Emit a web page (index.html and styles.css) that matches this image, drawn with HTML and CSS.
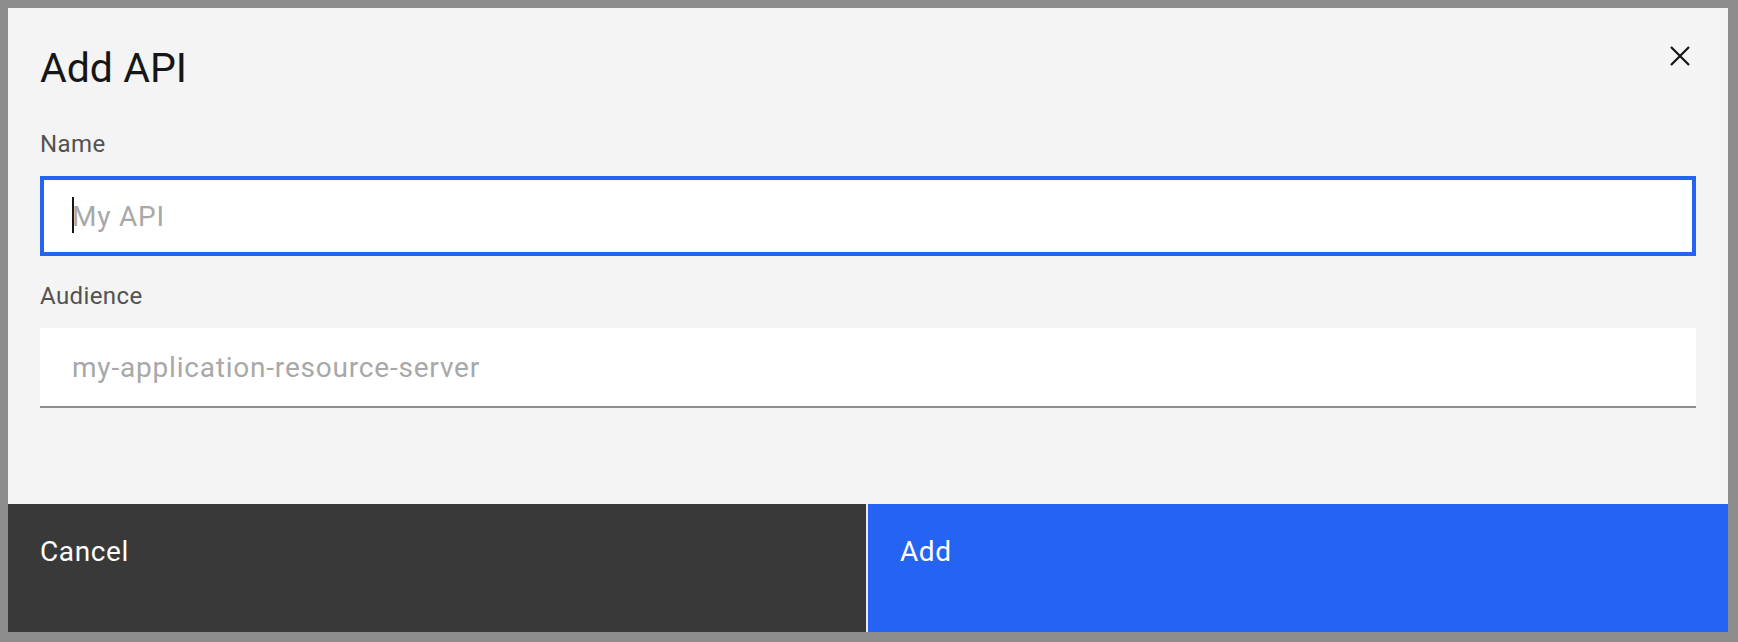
FILE: index.html
```html
<!DOCTYPE html>
<html lang="en">
<head>
<meta charset="utf-8">
<title>Add API</title>
<link rel="stylesheet" href="styles.css">
</head>
<body>
<div class="modal" role="dialog" aria-labelledby="modal-title">
  <div class="modal-body">
    <h2 class="modal-title" id="modal-title">Add API</h2>
    <button class="close-btn" type="button" aria-label="Close">
      <svg width="20" height="20" viewBox="0 0 20 20" aria-hidden="true">
        <path d="M1 1 L19 19 M19 1 L1 19" stroke="#161616" stroke-width="2.2" fill="none"/>
      </svg>
    </button>
    <div class="form-item">
      <label class="label" for="api-name">Name</label>
      <div class="input-wrap">
        <input class="text-input focused" id="api-name" type="text" placeholder="My API">
        <span class="caret"></span>
      </div>
    </div>
    <div class="form-item">
      <label class="label" for="api-audience">Audience</label>
      <div class="input-wrap">
        <input class="text-input" id="api-audience" type="text" placeholder="my-application-resource-server">
      </div>
    </div>
  </div>
  <div class="modal-footer">
    <button class="btn btn-secondary" type="button">Cancel</button>
    <button class="btn btn-primary" type="button">Add</button>
  </div>
</div>
</body>
</html>
```

FILE: styles.css
```css
html, body {
  margin: 0;
  padding: 0;
}

body {
  background: #8c8c8c;
  font-family: "Roboto", "Noto Sans", sans-serif;
  width: 1738px;
  height: 642px;
  overflow: hidden;
}

.modal {
  margin: 8px 10px 10px 8px;
  width: 1720px;
  height: 624px;
  background: #f4f4f4;
  display: flex;
  flex-direction: column;
  position: relative;
}

.modal-body {
  padding: 32px 32px 0 32px;
  display: flex;
  flex-direction: column;
}

.modal-title {
  margin: 0 0 32px 0;
  font-size: 41px;
  line-height: 56px;
  font-weight: 400;
  color: #161616;
}

.close-btn {
  position: absolute;
  top: 0;
  right: 0;
  width: 96px;
  height: 96px;
  border: 0;
  background: transparent;
  padding: 0;
  display: flex;
  align-items: center;
  justify-content: center;
  cursor: pointer;
}

.form-item {
  display: flex;
  flex-direction: column;
  margin-bottom: 24px;
}

.label {
  font-size: 24px;
  line-height: 32px;
  letter-spacing: 0.4px;
  color: #525252;
  margin-bottom: 16px;
}

.input-wrap {
  position: relative;
  display: flex;
}

.text-input {
  flex: 1;
  box-sizing: border-box;
  height: 80px;
  margin: 0;
  padding: 0 32px;
  border: 0;
  border-bottom: 2px solid #8d8d8d;
  background: #ffffff;
  font-family: inherit;
  font-size: 28px;
  letter-spacing: 0.8px;
  color: #161616;
  outline: none;
  caret-color: transparent;
}

.text-input::placeholder {
  color: #a8a8a8;
  opacity: 1;
}

.text-input.focused {
  border: 4px solid #2563f2;
  padding: 0 28px;
}

.caret {
  position: absolute;
  left: 32px;
  top: 21px;
  width: 2px;
  height: 36px;
  background: #161616;
}

.modal-footer {
  margin-top: auto;
  height: 128px;
  display: flex;
  gap: 2px;
  background: #ececec;
}

.btn {
  border: 0;
  margin: 0;
  padding: 30px 32px 0 32px;
  text-align: left;
  font-family: inherit;
  font-size: 28px;
  line-height: 36px;
  letter-spacing: 0.6px;
  color: #ffffff;
  display: flex;
  align-items: flex-start;
  cursor: pointer;
}

.btn-secondary {
  flex: 0 0 858px;
  background: #393939;
}

.btn-primary {
  flex: 1;
  background: #2563f2;
}
```
